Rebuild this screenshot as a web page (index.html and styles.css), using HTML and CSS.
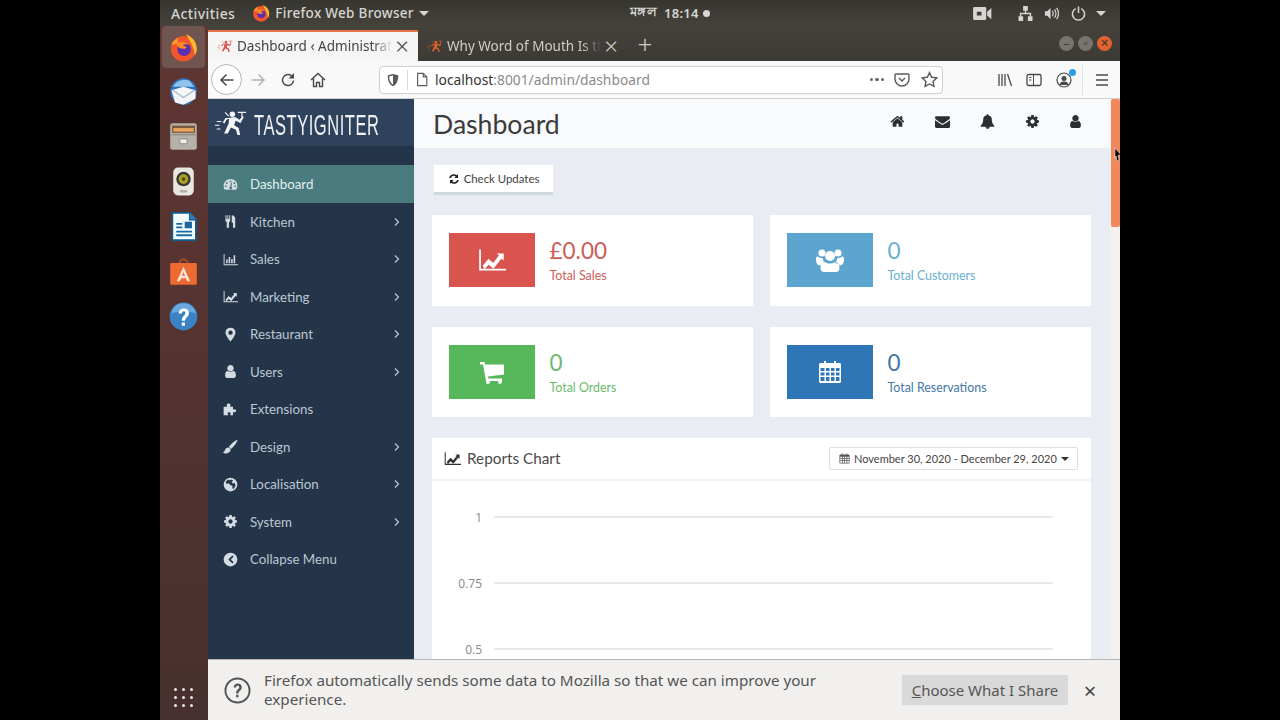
FILE: index.html
```html
<!DOCTYPE html>
<html lang="en">
<head>
    <meta charset="UTF-8">
    <meta name="viewport" content="width=device-width, initial-scale=1.0">
    <title>Dashboard - Administration</title>
    <link rel="stylesheet" href="styles.css">
</head>
<body>
    <svg class="sprite" xmlns="http://www.w3.org/2000/svg">
        <symbol id="i-home" viewBox="0 0 1792 1792"><path d="M1472 992v480q0 26-19 45t-45 19h-384v-384h-256v384h-384q-26 0-45-19t-19-45v-480q0-1 .5-3t.5-3l575-474 575 474q1 2 1 6zm223-69l-62 74q-8 9-21 11h-3q-13 0-21-7l-692-577-692 577q-12 8-24 7-13-2-21-11l-62-74q-8-10-7-23.5t11-21.5l719-599q32-26 76-26t76 26l244 204v-195q0-14 9-23t23-9h192q14 0 23 9t9 23v408l219 182q10 8 11 21.5t-7 23.5z"/></symbol>
        <symbol id="i-envelope" viewBox="0 0 1792 1792"><path d="M1792 710v794q0 66-47 113t-113 47h-1472q-66 0-113-47t-47-113v-794q44 49 101 87 362 246 497 345 57 42 92.5 65.5t94.5 48 110 24.5h2q51 0 110-24.5t94.5-48 92.5-65.5q170-123 498-345 57-39 100-87zm0-294q0 79-49 151t-122 123q-376 261-468 325-10 7-42.5 30.5t-54 38-52 32.5-57.5 27-50 9h-2q-23 0-50-9t-57.5-27-52-32.5-54-38-42.5-30.5q-91-64-262-182.5t-205-142.5q-62-42-117-115.5t-55-136.5q0-78 41.5-130t118.5-52h1472q65 0 112.5 47t47.5 113z"/></symbol>
        <symbol id="i-bell" viewBox="0 0 1792 1792"><path d="M912 1696q0-16-16-16-59 0-101.5-42.5t-42.5-101.5q0-16-16-16t-16 16q0 73 51.5 124.5t124.5 51.5q16 0 16-16zm816-288q0 52-38 90t-90 38h-448q0 106-75 181t-181 75-181-75-75-181h-448q-52 0-90-38t-38-90q50-42 91-88t85-119.5 74.5-158.5 50-206 19.5-260q0-152 117-282.5t307-158.5q-8-19-8-39 0-40 28-68t68-28 68 28 28 68q0 20-8 39 190 28 307 158.5t117 282.5q0 139 19.5 260t50 206 74.5 158.5 85 119.5 91 88z"/></symbol>
        <symbol id="i-cog" viewBox="0 0 1792 1792"><path d="M1152 896q0-106-75-181t-181-75-181 75-75 181 75 181 181 75 181-75 75-181zm512-109v222q0 12-8 23t-20 13l-185 28q-19 54-39 91 35 50 107 138 10 12 10 25t-9 23q-27 37-99 108t-94 71q-12 0-26-9l-138-108q-44 23-91 38-16 136-29 186-7 28-36 28h-222q-14 0-24.5-8.5t-11.5-21.5l-28-184q-49-16-90-37l-141 107q-10 9-25 9-14 0-25-11-126-114-165-168-7-10-7-23 0-12 8-23 15-21 51-66.5t54-70.5q-27-50-41-99l-183-27q-13-2-21-12.5t-8-23.5v-222q0-12 8-23t19-13l186-28q14-46 39-92-40-57-107-138-10-12-10-24 0-10 9-23 26-36 98.5-107.5t94.5-71.5q13 0 26 10l138 107q44-23 91-38 16-136 29-186 7-28 36-28h222q14 0 24.5 8.5t11.5 21.5l28 184q49 16 90 37l142-107q9-9 24-9 13 0 25 10 129 119 165 170 7 8 7 22 0 12-8 23-15 21-51 66.5t-54 70.5q26 50 41 98l183 28q13 2 21 12.5t8 23.5z"/></symbol>
        <symbol id="i-user" viewBox="0 0 1792 1792"><path d="M1536 1399q0 109-62.5 187t-150.5 78h-854q-88 0-150.5-78t-62.5-187q0-85 8.5-160.5t31.5-152 58.5-131 94-89 134.5-34.5q131 128 313 128t313-128q76 0 134.5 34.5t94 89 58.5 131 31.5 152 8.5 160.5zm-256-887q0 159-112.5 271.5t-271.5 112.5-271.5-112.5-112.5-271.5 112.5-271.5 271.5-112.5 271.5 112.5 112.5 271.5z"/></symbol>
        <symbol id="i-gauge" viewBox="0 0 24 24"><path fill-rule="evenodd" d="M12 3C5.6 3 1 8 1 14c0 2.500 .8 4.800 2 6.500h18c1.200-1.700 2-4 2-6.500C23 8 18.400 3 12 3zM12 5.500a1.500 1.500 0 1 1 0 3 1.500 1.500 0 0 1 0-3zM6 8a1.500 1.500 0 1 1 0 3 1.500 1.500 0 0 1 0-3zM18 8a1.500 1.500 0 1 1 0 3 1.500 1.500 0 0 1 0-3zM4.500 13a1.500 1.500 0 1 1 0 3 1.500 1.500 0 0 1 0-3zM19.500 13a1.500 1.500 0 1 1 0 3 1.500 1.500 0 0 1 0-3zM14.500 9.500l-1 6.200a2.200 2.200 0 1 1-1.900-.2l1.200-6.200z"/></symbol>
        <symbol id="i-cutlery" viewBox="0 0 24 24"><path d="M4 2h1.500v6H7V2h1.500v6H10V2h1.500v8c0 1.500-1 2.500-2 3v9H6v-9c-1-.5-2-1.500-2-3zM14 2c3 0 5.500 2 5.500 6v14h-3.500v-8h-2z"/></symbol>
        <symbol id="i-bars" viewBox="0 0 24 24"><path d="M1 3h1.500v16.500H24V21H1zM5 12h2.500v6H5zM9 8h2.500v10H9zM13 11h2.500v7H13zM17 5h2.500v13H17z"/></symbol>
        <symbol id="i-line" viewBox="0 0 24 24"><path d="M1 3h1.500v16.500H24V21H1z"/><path d="M4 17l5-6 4 3.500 5-6.500-2-1.500h6v6l-2-1.500-6.800 8.500-4-3.500-3.700 4z"/></symbol>
        <symbol id="i-pin" viewBox="0 0 24 24"><path fill-rule="evenodd" d="M12 1a8 8 0 0 0-8 8c0 4.500 8 14 8 14s8-9.500 8-14a8 8 0 0 0-8-8zm0 4.500a3.500 3.500 0 1 1 0 7 3.500 3.500 0 0 1 0-7z"/></symbol>
        <symbol id="i-puzzle" viewBox="0 0 24 24"><path d="M9 2.500c1.500 0 3 1 3 2.500 0 1-.6 1.500-.6 2.500H16v4.500c1 0 1.500-.6 2.500-.6 1.500 0 2.500 1.200 2.500 2.600s-1 2.500-2.500 2.500c-1 0-1.500-.5-2.500-.5v5h-4.500c0-1 .6-1.500.6-2.500 0-1.200-1-2-2.300-2s-2.300.8-2.300 2c0 1 .6 1.500.6 2.500H1V7.500h5.500c0-1-.6-1.500-.6-2.500C5.900 3.500 7.500 2.500 9 2.500z"/></symbol>
        <symbol id="i-brush" viewBox="0 0 24 24"><path d="M22 1.500c.8 0 1.300.6 1 1.400-2 4.500-6.500 10.500-10 13l-3.500-3.500C12 9 17.500 3.500 22 1.500zM8.500 13.500c2 .3 3.400 1.700 3.700 3.700C12 20.500 9 23 5 23c-2 0-4-.7-5-2 1.500-.5 2.500-1.200 3-3 .6-2.500 2.500-4.500 5.500-4.500z"/></symbol>
        <symbol id="i-globe" viewBox="0 0 24 24"><path fill-rule="evenodd" d="M12 1a11 11 0 1 0 0 22 11 11 0 0 0 0-22zM8 4l3 1 3-1 2 2-2 2 1 2 4 0 1 4-3 5-2-1v-4l-3-1-3-3-3 1-2-3z"/></symbol>
        <symbol id="i-back-circle" viewBox="0 0 24 24"><path fill-rule="evenodd" d="M12 1a11 11 0 1 0 0 22 11 11 0 0 0 0-22zm3 4.500l2 2L12.500 12l4.500 4.500-2 2L8.500 12z"/></symbol>
        <symbol id="i-chevron" viewBox="0 0 10 10"><path d="M3 1.500L6.500 5 3 8.500" fill="none" stroke="currentColor" stroke-width="1.200"/></symbol>
        <symbol id="i-refresh" viewBox="0 0 24 24"><path d="M20 2.500v7.500h-7.500l3-3A6.500 6.500 0 0 0 5.600 10H2.300A9.500 9.500 0 0 1 17.800 4.700zM4 21.500V14h7.500l-3 3a6.500 6.500 0 0 0 9.900-3h3.300A9.500 9.500 0 0 1 6.200 19.300z"/></symbol>
        <symbol id="i-cart" viewBox="0 0 24 24"><path d="M0 2h4.500l.7 2.500H24v10l-16 2 .4 2H22v2.500H6L3 4.500H0z"/><circle cx="8" cy="22" r="2"/><circle cx="20" cy="22" r="2"/></symbol>
        <symbol id="i-users" viewBox="0 0 28 24"><circle cx="6" cy="5" r="3.500"/><circle cx="22" cy="5" r="3.500"/><circle cx="14" cy="8" r="5"/><path d="M0 10c0-1 1-1.500 2-1.500 1 1 2.500 1.500 4 1.500l1 .5c0 2 1 3.500 2 4.500-3 .5-4.500 1.500-5 2.500C1 17 0 15 0 10zM28 10c0-1-1-1.500-2-1.500-1 1-2.500 1.500-4 1.500l-1 .5c0 2-1 3.500-2 4.500 3 .5 4.500 1.500 5 2.500 3-.5 4-2.500 4-7.500zM9 14c1.500 1 3 1.500 5 1.500s3.500-.5 5-1.500c3 0 4.500 2.500 4.500 6 0 2.500-1.500 4-3.500 4H8c-2 0-3.500-1.500-3.500-4 0-3.500 1.500-6 4.500-6z"/></symbol>
        <symbol id="i-calendar" viewBox="0 0 24 24"><path fill-rule="evenodd" d="M6 1h2v2h8V1h2v2h3.500c.8 0 1.500.7 1.500 1.500v17c0 .8-.7 1.500-1.500 1.500h-19C1.700 23 1 22.300 1 21.500v-17C1 3.700 1.700 3 2.500 3H6zM2.500 8v3h4V8zM8 8v3h3.500V8zM13 8v3h3.500V8zM18 8v3h3.500V8zM2.500 12.500v3h4v-3zM8 12.500v3h3.500v-3zM13 12.500v3h3.500v-3zM18 12.500v3h3.500v-3zM2.500 17v4h4v-4zM8 17v4h3.500v-4zM13 17v4h3.500v-4zM18 17v4h3.500v-4z"/></symbol>
        <symbol id="runner" viewBox="0 0 36 28">
            <circle cx="20" cy="5" r="3"/>
            <path d="M15 9l8-1 5 3 3-4 1.500 1-3.500 6.500-5.500-2.500-1.500 5 5 3 1.500 7.500h-3l-1.500-5.500-5.500-2.500-3.500 6.500H11l5-11 .5-5-3 1-2 4-2-1 3-5z"/>
            <path d="M26 3h9M30.500 3v5M12 3l4 4" stroke="currentColor" stroke-width="1.300" fill="none"/>
            <path d="M3 13h5M1 17h5M3 21h4" stroke="currentColor" stroke-width="1.100" fill="none"/>
        </symbol>
        <symbol id="ff-logo" viewBox="0 0 24 24">
            <circle cx="12" cy="13" r="10.500" fill="#f0562c"/>
            <path d="M14 1c5 2 9 6 9 12 0 2-.5 4-1.500 5.500-1-7-4-12-7.500-17.500z" fill="#ffb52c"/>
            <path d="M2 10c1-3 3-5 6-6-1 2-1 3 0 4z" fill="#ff9a2a"/>
            <circle cx="12.500" cy="13.500" r="5.500" fill="#5b2fb0"/>
            <path d="M6 9c3-2.500 8-2 10.500 1-2-1-4-1-5 0 1 1 3 1 3 2.500-1 1-4 .5-6 0z" fill="#ff8a1f"/>
        </symbol>
    </svg>

    <div class="screen">
        <div class="panel">
            <div class="panel-left">
                <span class="activities">Activities</span>
                <svg class="panel-ff" viewBox="0 0 24 24"><use href="#ff-logo"/></svg>
                <span class="panel-app">Firefox Web Browser</span>
                <span class="caret"></span>
            </div>
            <div class="panel-clock"><span class="clock-day">মঙ্গল</span> 18:14 <span class="clock-dot"></span></div>
            <div class="panel-right">
                <svg class="tray tray-cam" viewBox="0 0 20 16"><path fill-rule="evenodd" d="M2 1h11a1.500 1.500 0 0 1 1.500 1.500v11A1.500 1.500 0 0 1 13 15H2a1.500 1.500 0 0 1-1.500-1.500v-11A1.500 1.500 0 0 1 2 1zm2.500 5v4h5V6zM15.500 6L20 2v12l-4.500-4z"/></svg>
                <svg class="tray tray-net" viewBox="0 0 16 16"><path d="M5.500 0h5v5H8.700v2.300H14V11h1.500v5h-5v-5h2V8.800H3.500V11h2v5h-5v-5H2V7.300h5.300V5H5.500z"/></svg>
                <svg class="tray tray-vol" viewBox="0 0 16 16"><path d="M1 5.500h2.500L7 2v12l-3.500-3.500H1z"/><path d="M9 5c1 1.800 1 4.200 0 6M11.300 3.500c1.800 2.800 1.800 6.200 0 9M13.500 2c2.500 3.800 2.500 8.200 0 12" fill="none" stroke="currentColor" stroke-width="1.300"/></svg>
                <svg class="tray tray-power" viewBox="0 0 16 16"><path d="M5 2.800a6.500 6.500 0 1 0 6 0M8 .5v7" fill="none" stroke="currentColor" stroke-width="1.600"/></svg>
                <span class="caret"></span>
            </div>
        </div>

        <div class="desktop">
            <div class="dock">
                <div class="dock-item dock-active">
                    <svg class="dock-icon" viewBox="0 0 24 24"><use href="#ff-logo"/></svg>
                </div>
                <div class="dock-item">
                    <svg class="dock-icon" viewBox="0 0 24 24"><circle cx="12" cy="12" r="11" fill="#2f6fb5"/><path d="M3 8c3-5 9-7 14-5l4 5z" fill="#8dc3ee"/><path d="M2 11l10-3 10 3v7l-10 5-7-2z" fill="#f3f5f8"/><path d="M3 11l9 6 9-6" fill="none" stroke="#a9b6c4"/></svg>
                </div>
                <div class="dock-item">
                    <svg class="dock-icon" viewBox="0 0 24 24"><rect x="1" y="1" width="22" height="22" rx="2" fill="#b5b0a8"/><rect x="2.500" y="3" width="19" height="6" fill="#7b5a3a"/><rect x="3.500" y="5" width="17" height="3" fill="#e9a35a"/><rect x="2" y="10" width="20" height="1" fill="#8e8a83"/><rect x="9" y="14" width="6" height="4" rx="1" fill="#f0eee9" stroke="#77736c" stroke-width=".6"/></svg>
                </div>
                <div class="dock-item">
                    <svg class="dock-icon" viewBox="0 0 24 24"><rect x="3.500" y="0.500" width="17" height="23" rx="4" fill="#e8e6e0"/><circle cx="12" cy="10" r="6" fill="#3b3a30"/><circle cx="12" cy="10" r="4" fill="#a9a227"/><circle cx="12" cy="10" r="1.500" fill="#4a4720"/><rect x="9" y="19" width="6" height="2" rx="1" fill="#b3b0a8"/></svg>
                </div>
                <div class="dock-item">
                    <svg class="dock-icon" viewBox="0 0 24 24"><path d="M2 0h15l6 6v18H2z" fill="#0d5b8f"/><path d="M3.500 1.500h13v5.500h5v15.500h-18z" fill="#f5fafc"/><path d="M17 0l6 6h-6z" fill="#2b7bb5"/><path d="M6 9h5v1.500H6zM6 12h5v1.500H6zM13 8h6v5.500h-6zM6 15.500h13V17H6zM6 18.500h13V20H6z" fill="#17699f"/></svg>
                </div>
                <div class="dock-item">
                    <svg class="dock-icon" viewBox="0 0 24 24"><path d="M8 5c0-5 8-5 8 0h-1.500c0-3-5-3-5 0z" fill="#a84f25"/><rect x="1" y="5" width="22" height="18" rx="1" fill="#ed6b32"/><path d="M12 8l5.500 12H15l-1-2.500h-4L9 20H6.500zM12 12.500l-1.200 3h2.400z" fill="#fbe3d6"/></svg>
                </div>
                <div class="dock-item">
                    <svg class="dock-icon" viewBox="0 0 24 24"><circle cx="12" cy="12" r="11.500" fill="#3a82c4"/><path d="M2 10a10 9 0 0 1 20 0c-4-3-16-3-20 0z" fill="#6aa9de"/><path d="M8 9.500c0-5.500 8.500-5.500 8.500-.5 0 3.500-3.300 3.500-3.300 6.500h-2.600c0-4 3-4.500 3-6.500 0-2-3-2-3 .5zM10.600 17h2.600v2.600h-2.600z" fill="#fff"/></svg>
                </div>
                <div class="dock-spacer"></div>
                <div class="dock-grid">
                    <i></i><i></i><i></i><i></i><i></i><i></i><i></i><i></i><i></i>
                </div>
            </div>

            <div class="window">
                <div class="titlebar">
                    <div class="tab tab-active">
                        <svg class="tab-icon" viewBox="0 0 36 28"><use href="#runner"/></svg>
                        <span class="tab-title">Dashboard ‹ Administrat</span>
                        <span class="tab-close">×</span>
                    </div>
                    <div class="tab">
                        <svg class="tab-icon tab-icon-orange" viewBox="0 0 36 28"><use href="#runner"/></svg>
                        <span class="tab-title">Why Word of Mouth Is th</span>
                        <span class="tab-close">×</span>
                    </div>
                    <span class="tab-new">+</span>
                    <div class="win-buttons">
                        <span class="win-btn">–</span>
                        <span class="win-btn">▫</span>
                        <span class="win-btn win-close">×</span>
                    </div>
                </div>

                <div class="toolbar">
                    <span class="nav-back">
                        <svg class="tb-icon" viewBox="0 0 16 16"><path d="M14.500 8H2M7.500 2.500L2 8l5.500 5.500" fill="none" stroke="currentColor" stroke-width="1.500"/></svg>
                    </span>
                    <svg class="tb-icon nav-forward" viewBox="0 0 16 16"><path d="M1.500 8H14M8.500 2.500L14 8l-5.500 5.500" fill="none" stroke="currentColor" stroke-width="1.500"/></svg>
                    <svg class="tb-icon nav-reload" viewBox="0 0 16 16"><path d="M13.500 8.500A5.500 5.500 0 1 1 11.500 3.800" fill="none" stroke="currentColor" stroke-width="1.500"/><path d="M14 1v5.500H8.500z"/></svg>
                    <svg class="tb-icon nav-home" viewBox="0 0 16 16"><path d="M1 8l7-6.500L15 8M3.500 6.500v8h3v-4h3v4h3v-8" fill="none" stroke="currentColor" stroke-width="1.400"/></svg>
                    <div class="urlbar">
                        <svg class="url-shield" viewBox="0 0 16 16"><path fill-rule="evenodd" d="M8 1l6 1.500c0 6-1.500 10.500-6 12.500C3.500 13 2 8.500 2 2.500zm0 1.800L3.600 3.900C3.800 8.300 5 11.300 8 13z"/></svg>
                        <span class="url-sep"></span>
                        <svg class="url-page" viewBox="0 0 16 16"><path d="M3 1h6.500L13.500 5v10H3zM9.500 1v4h4" fill="none" stroke="currentColor" stroke-width="1.300"/></svg>
                        <span class="url-text"><b>localhost</b>:8001/admin/dashboard</span>
                        <span class="url-dots"><i></i><i></i><i></i></span>
                        <svg class="url-pocket" viewBox="0 0 16 16"><path d="M2 2h12c.6 0 1 .4 1 1v4c0 4-3.200 7-7 7s-7-3-7-7V3c0-.6.400-1 1-1zM5 6l3 3 3-3" fill="none" stroke="currentColor" stroke-width="1.400"/></svg>
                        <svg class="url-star" viewBox="0 0 16 16"><path d="M8 1.500l2 4.400 4.800.6-3.500 3.300.9 4.700L8 12.200l-4.200 2.300.9-4.700L1.200 6.500 6 5.900z" fill="none" stroke="currentColor" stroke-width="1.300"/></svg>
                    </div>
                    <svg class="tb-icon tb-library" viewBox="0 0 16 16"><path d="M2 2v12M5 2v12M8 2v12M10.500 2l4 12" fill="none" stroke="currentColor" stroke-width="1.300"/></svg>
                    <svg class="tb-icon tb-sidebar" viewBox="0 0 16 16"><rect x="1" y="2.500" width="14" height="11" rx="1.500" fill="none" stroke="currentColor" stroke-width="1.300"/><path d="M7.500 2.500v11M3 5.500h2.500M3 8h2.500" stroke="currentColor"/></svg>
                    <span class="tb-account">
                        <svg class="tb-icon" viewBox="0 0 16 16"><circle cx="8" cy="8" r="7" fill="none" stroke="currentColor" stroke-width="1.200"/><circle cx="8" cy="6.500" r="2.500"/><path d="M3.500 13c.5-3 2.500-3.500 4.500-3.500s4 .5 4.500 3.500z"/></svg>
                        <span class="account-dot"></span>
                    </span>
                    <span class="tb-sep"></span>
                    <svg class="tb-icon tb-menu" viewBox="0 0 16 16"><path d="M2 3h12M2 8h12M2 13h12" stroke="currentColor" stroke-width="1.500"/></svg>
                </div>

                <div class="page">
                    <aside class="sidebar">
                        <div class="logo">
                            <svg class="logo-art" viewBox="0 0 36 28"><use href="#runner"/></svg>
                            <span class="logo-text">TASTYIGNITER</span>
                        </div>
                        <nav class="side-nav">
                            <a class="nav-item active"><svg class="nav-icon"><use href="#i-gauge"/></svg><span>Dashboard</span></a>
                            <a class="nav-item"><svg class="nav-icon"><use href="#i-cutlery"/></svg><span>Kitchen</span><svg class="nav-arrow"><use href="#i-chevron"/></svg></a>
                            <a class="nav-item"><svg class="nav-icon"><use href="#i-bars"/></svg><span>Sales</span><svg class="nav-arrow"><use href="#i-chevron"/></svg></a>
                            <a class="nav-item"><svg class="nav-icon"><use href="#i-line"/></svg><span>Marketing</span><svg class="nav-arrow"><use href="#i-chevron"/></svg></a>
                            <a class="nav-item"><svg class="nav-icon"><use href="#i-pin"/></svg><span>Restaurant</span><svg class="nav-arrow"><use href="#i-chevron"/></svg></a>
                            <a class="nav-item"><svg class="nav-icon"><use href="#i-user"/></svg><span>Users</span><svg class="nav-arrow"><use href="#i-chevron"/></svg></a>
                            <a class="nav-item"><svg class="nav-icon"><use href="#i-puzzle"/></svg><span>Extensions</span></a>
                            <a class="nav-item"><svg class="nav-icon"><use href="#i-brush"/></svg><span>Design</span><svg class="nav-arrow"><use href="#i-chevron"/></svg></a>
                            <a class="nav-item"><svg class="nav-icon"><use href="#i-globe"/></svg><span>Localisation</span><svg class="nav-arrow"><use href="#i-chevron"/></svg></a>
                            <a class="nav-item"><svg class="nav-icon"><use href="#i-cog"/></svg><span>System</span><svg class="nav-arrow"><use href="#i-chevron"/></svg></a>
                            <a class="nav-item"><svg class="nav-icon"><use href="#i-back-circle"/></svg><span>Collapse Menu</span></a>
                        </nav>
                    </aside>

                    <main class="main">
                        <header class="page-header">
                            <h1>Dashboard</h1>
                            <div class="header-icons">
                                <svg class="header-icon"><use href="#i-home"/></svg>
                                <svg class="header-icon"><use href="#i-envelope"/></svg>
                                <svg class="header-icon"><use href="#i-bell"/></svg>
                                <svg class="header-icon"><use href="#i-cog"/></svg>
                                <svg class="header-icon"><use href="#i-user"/></svg>
                            </div>
                        </header>

                        <div class="content">
                            <button class="btn-updates"><svg class="btn-icon"><use href="#i-refresh"/></svg>Check Updates</button>

                            <div class="stat-grid">
                                <div class="stat-card stat-red">
                                    <div class="stat-box"><svg class="stat-icon"><use href="#i-line"/></svg></div>
                                    <div><div class="stat-value">£0.00</div><div class="stat-label">Total Sales</div></div>
                                </div>
                                <div class="stat-card stat-cyan">
                                    <div class="stat-box"><svg class="stat-icon"><use href="#i-users"/></svg></div>
                                    <div><div class="stat-value">0</div><div class="stat-label">Total Customers</div></div>
                                </div>
                                <div class="stat-card stat-green">
                                    <div class="stat-box"><svg class="stat-icon"><use href="#i-cart"/></svg></div>
                                    <div><div class="stat-value">0</div><div class="stat-label">Total Orders</div></div>
                                </div>
                                <div class="stat-card stat-blue">
                                    <div class="stat-box"><svg class="stat-icon"><use href="#i-calendar"/></svg></div>
                                    <div><div class="stat-value">0</div><div class="stat-label">Total Reservations</div></div>
                                </div>
                            </div>

                            <section class="chart-card">
                                <div class="chart-head">
                                    <svg class="chart-icon"><use href="#i-line"/></svg>
                                    <h3>Reports Chart</h3>
                                    <div class="date-range">
                                        <svg class="date-icon"><use href="#i-calendar"/></svg>
                                        <span>November 30, 2020 - December 29, 2020</span>
                                        <span class="date-caret"></span>
                                    </div>
                                </div>
                                <div class="chart-body">
                                    <div class="chart-row"><span class="chart-label">1</span><span class="chart-line"></span></div>
                                    <div class="chart-row"><span class="chart-label">0.75</span><span class="chart-line"></span></div>
                                    <div class="chart-row"><span class="chart-label">0.5</span><span class="chart-line"></span></div>
                                </div>
                            </section>
                        </div>
                    </main>

                    <div class="scrollbar"><div class="scroll-thumb"></div></div>
                    <svg class="cursor" viewBox="0 0 8 14"><path d="M1 0l6 7-3 .3 1 5-2 .7-1-5-1 2z" fill="#000" stroke="#fff" stroke-width=".5"/></svg>

                    <div class="notice">
                        <svg class="notice-icon" viewBox="0 0 28 28"><circle cx="14" cy="14" r="12.500" fill="none" stroke="currentColor" stroke-width="2"/><path d="M10 11c0-5.500 8.500-5.500 8.500-.5 0 3.500-3.500 3.500-3.500 6.500h-2.500c0-4 3.300-4.500 3.300-6.500 0-2-3.300-2-3.300.5zM12.500 18.500H15V21h-2.500z"/></svg>
                        <p class="notice-text">Firefox automatically sends some data to Mozilla so that we can improve your experience.</p>
                        <button class="notice-btn"><u>C</u>hoose What I Share</button>
                        <span class="notice-close">×</span>
                    </div>
                </div>
            </div>
        </div>
    </div>
</body>
</html>
```

FILE: styles.css
```css
* {
    box-sizing: border-box;
}

html, body {
    margin: 0;
    height: 100%;
    background: #000;
    overflow: hidden;
}

body {
    font-family: 'Lato', 'Open Sans', sans-serif;
    color: #333;
}

.sprite {
    position: absolute;
    width: 0;
    height: 0;
}

.screen {
    width: 960px;
    height: 720px;
    margin: 0 auto;
    display: flex;
    flex-direction: column;
}

/* ubuntu top panel */
.panel {
    height: 26px;
    flex: none;
    display: flex;
    align-items: center;
    background: linear-gradient(#37352f, #45423c);
    color: #d6d5d1;
    font-family: 'Noto Sans', 'Open Sans', sans-serif;
    font-size: 13.5px;
    font-weight: 500;
    letter-spacing: .3px;
}

.activities {
    font-size: 14px;
    letter-spacing: .4px;
}

.panel-left {
    width: 470px;
    display: flex;
    align-items: center;
    padding-left: 11px;
}

.panel-ff {
    width: 18px;
    height: 18px;
    margin-left: 17px;
}

.panel-app {
    margin-left: 5px;
}

.caret {
    width: 0;
    height: 0;
    margin-left: 5px;
    border-left: 5px solid transparent;
    border-right: 5px solid transparent;
    border-top: 5px solid #d6d5d1;
}

.panel-clock {
    display: flex;
    align-items: center;
    gap: 5px;
    font-size: 13px;
    font-weight: 600;
}

.clock-day {
    font-family: 'Noto Sans', 'Noto Sans CJK SC', sans-serif;
    font-size: 12.5px;
    margin-right: 2px;
}

.clock-dot {
    width: 7px;
    height: 7px;
    margin-left: -1px;
    border-radius: 50%;
    background: #d6d5d1;
}

.panel-right {
    margin-left: auto;
    padding-right: 14px;
    display: flex;
    align-items: center;
}

.tray {
    fill: currentColor;
    height: 15px;
}

.tray-cam { width: 20px; margin-right: 26px; }
.tray-net { width: 15px; margin-right: 11px; }
.tray-vol { width: 15px; margin-right: 12px; }
.tray-power { width: 15px; margin-right: 5px; }

/* desktop + dock */
.desktop {
    flex: 1;
    display: flex;
    min-height: 0;
}

.dock {
    width: 48px;
    flex: none;
    display: flex;
    flex-direction: column;
    align-items: center;
    padding: 0 3px 0 2px;
    background: linear-gradient(#5f3632, #47302f);
}

.dock-item {
    width: 43px;
    height: 45px;
    flex: none;
    display: flex;
    align-items: center;
    justify-content: center;
}

.dock-active {
    height: 42px;
    margin-bottom: 1px;
    border-radius: 4px;
    background: #6f5450;
}

.dock-icon {
    width: 29px;
    height: 29px;
    margin-right: 1px;
}

.dock-spacer {
    flex: 1;
}

.dock-grid {
    display: grid;
    grid-template-columns: repeat(3, 3.500px);
    gap: 4.500px;
    margin-bottom: 13px;
}

.dock-grid i {
    width: 3.500px;
    height: 3.500px;
    border-radius: 50%;
    background: #f0eeee;
}

/* firefox window */
.window {
    flex: 1;
    min-width: 0;
    display: flex;
    flex-direction: column;
}

.titlebar {
    height: 35px;
    flex: none;
    display: flex;
    align-items: flex-end;
    background: linear-gradient(#45423c, #3c3a35);
    font-family: 'Noto Sans', 'Open Sans', sans-serif;
    font-size: 13.5px;
    color: #cfcdc8;
}

.tab {
    width: 209px;
    height: 31px;
    display: flex;
    align-items: center;
    padding: 0 6px 0 9px;
}

.tab-active {
    width: 210px;
    padding-bottom: 2px;
    background: #f5f5f5;
    border-top: 2px solid #e8734a;
    color: #444;
}

.tab-icon {
    width: 16px;
    height: 14px;
    flex: none;
    fill: #d9534f;
    color: #d9534f;
}

.tab-icon-orange {
    fill: #e0622a;
    color: #e0622a;
}

.tab-title {
    flex: 1;
    min-width: 0;
    margin-left: 4px;
    white-space: nowrap;
    -webkit-mask-image: linear-gradient(90deg, #000 88%, transparent);
    mask-image: linear-gradient(90deg, #000 88%, transparent);
}

.tab-close {
    width: 20px;
    text-align: center;
    font-size: 24px;
    line-height: 20px;
    font-weight: 300;
}

.tab-new {
    margin: 0 0 1px 9px;
    width: 18px;
    height: 30px;
    font-size: 26px;
    line-height: 28px;
    font-weight: 300;
    text-align: center;
}

.win-buttons {
    margin-left: auto;
    align-self: center;
    display: flex;
    gap: 4px;
    padding-right: 8px;
}

.win-btn {
    width: 15px;
    height: 15px;
    border-radius: 50%;
    background: #76746f;
    color: #35342f;
    font-size: 11px;
    line-height: 14px;
    text-align: center;
}

.win-close {
    background: #e2622f;
    font-size: 14px;
}

.toolbar {
    height: 38px;
    flex: none;
    display: flex;
    align-items: center;
    padding-left: 3px;
    background: #f9f9f9;
    border-bottom: 1px solid #cfcfcf;
    color: #4a4a4a;
}

.nav-back {
    width: 31px;
    height: 31px;
    display: flex;
    align-items: center;
    justify-content: center;
    background: #fff;
    border: 1px solid #b5b5b5;
    border-radius: 50%;
}

.tb-icon {
    width: 16px;
    height: 16px;
    flex: none;
    fill: currentColor;
}

.nav-forward {
    margin-left: 8px;
    color: #b5b5b5;
}

.nav-reload { margin-left: 14px; }
.nav-home { margin-left: 14px; }

.urlbar {
    width: 564px;
    height: 28px;
    margin-left: 53px;
    display: flex;
    align-items: center;
    padding: 0 4px 0 6px;
    background: #fff;
    border: 1px solid #d0d0d0;
    border-radius: 4px;
    color: #5a5a5a;
}

.url-shield {
    width: 14px;
    height: 14px;
    fill: currentColor;
}

.url-sep {
    width: 1px;
    height: 20px;
    margin: 0 7px;
    background: #d8d8d8;
}

.url-page {
    width: 14px;
    height: 15px;
}

.url-text {
    margin-left: 6px;
    flex: 1;
    font-family: 'Noto Sans', 'Open Sans', sans-serif;
    font-size: 13.8px;
    color: #8a8a8a;
}

.url-text b {
    font-weight: 400;
    color: #333;
}

.url-dots {
    display: flex;
    gap: 2px;
    margin-right: 10px;
}

.url-dots i {
    width: 3.500px;
    height: 3.500px;
    border-radius: 50%;
    background: #666;
}

.url-pocket {
    width: 16px;
    height: 16px;
    margin-right: 11px;
}

.url-star {
    width: 17px;
    height: 17px;
}

.tb-library { margin-left: 54px; }
.tb-sidebar { margin-left: 13px; }

.tb-account {
    position: relative;
    display: flex;
    margin-left: 14px;
}

.account-dot {
    position: absolute;
    top: -3px;
    right: -4px;
    width: 7px;
    height: 7px;
    border-radius: 50%;
    background: #2a9de8;
}

.tb-sep {
    width: 1px;
    height: 30px;
    margin-left: 10px;
    background: #e2e2e2;
}

.tb-menu { margin-left: 11px; }

/* page */
.page {
    position: relative;
    flex: 1;
    min-height: 0;
    display: flex;
    overflow: hidden;
}

.sidebar {
    width: 206px;
    flex: none;
    background: #253549;
}

.logo {
    height: 47px;
    display: flex;
    align-items: center;
    padding-left: 6px;
    background: #2e425c;
}

.logo-art {
    width: 33px;
    height: 27px;
    flex: none;
    fill: #f2f4f6;
    color: #f2f4f6;
}

.logo-text {
    margin: 5px 0 0 7px;
    font-family: 'Liberation Sans Narrow', 'Liberation Sans', sans-serif;
    font-size: 16.5px;
    letter-spacing: .55px;
    white-space: nowrap;
    color: #eef0f3;
    transform: scaleY(1.8);
}

.side-nav {
    margin-top: 19.300px;
}

.nav-item {
    height: 37.500px;
    display: flex;
    align-items: center;
    padding: 0 12px 0 15px;
    color: #bcc7d2;
    font-size: 13.300px;
}

.nav-item.active {
    background: #4a7b7e;
    color: #e3eeee;
}

.nav-icon {
    width: 15px;
    height: 15px;
    flex: none;
    margin-right: 12px;
    fill: #d4dbe2;
}

.nav-arrow {
    width: 10px;
    height: 10px;
    margin-left: auto;
    color: #bcc7d2;
}

.main {
    flex: 1;
    min-width: 0;
    display: flex;
    flex-direction: column;
    background: #e9edf3;
}

.page-header {
    height: 49px;
    flex: none;
    display: flex;
    align-items: center;
    padding: 0 0 0 19px;
    background: #f9fafc;
}

.page-header h1 {
    margin: 0;
    font-size: 26.600px;
    font-weight: 400;
    color: #3b3b3b;
}

.header-icons {
    margin-left: auto;
    display: flex;
    gap: 30px;
    padding: 0 27px 4px 0;
}

.header-icon {
    width: 15px;
    height: 15px;
    fill: #2b2f33;
}

.header-icon:last-child {
    margin-left: -2px;
}

.content {
    padding: 17px 19px 0 18px;
}

.btn-updates {
    width: 121px;
    height: 31px;
    display: flex;
    align-items: center;
    justify-content: center;
    gap: 4px;
    margin: -1px 0 20px 1px;
    padding: 0;
    background: #fff;
    border: 1px solid #eef0f3;
    border-bottom: 3px solid #cdd8df;
    border-radius: 2px;
    font-family: inherit;
    font-size: 11.400px;
    color: #3f3f3f;
}

.btn-icon {
    width: 12px;
    height: 12px;
    fill: #222;
}

.stat-grid {
    display: grid;
    grid-template-columns: 321px 321px;
    gap: 21px 17px;
    margin-bottom: 21px;
}

.stat-card {
    height: 90.500px;
    display: flex;
    align-items: flex-start;
    gap: 14.500px;
    padding: 18px 17px;
    background: #fff;
}

.stat-box {
    width: 86px;
    height: 54px;
    flex: none;
    display: flex;
    align-items: center;
    justify-content: center;
}

.stat-icon {
    width: 28px;
    height: 24px;
    fill: #fff;
}

.stat-red .stat-icon {
    height: 28px;
}

.stat-value {
    font-size: 22.500px;
    line-height: 35px;
}

.stat-label {
    font-size: 12.400px;
    line-height: 15px;
}

.stat-red .stat-box { background: #d9534f; }
.stat-red { color: #cd5c58; }
.stat-cyan .stat-box { background: #5ba5cf; }
.stat-cyan { color: #6aaed3; }
.stat-green .stat-box { background: #55b65a; }
.stat-green { color: #6bbb6e; }
.stat-blue .stat-box { background: #2f76b6; }
.stat-blue { color: #3f78a8; }

.chart-card {
    background: #fff;
}

.chart-head {
    height: 43px;
    display: flex;
    align-items: center;
    padding: 0 13px 0 11px;
    border-bottom: 2px solid #f0f2f5;
}

.chart-icon {
    width: 19px;
    height: 17px;
    fill: #333;
}

.chart-head h3 {
    margin: -1px 0 0 5px;
    font-size: 15.300px;
    font-weight: 400;
    color: #4a4a4a;
}

.date-range {
    margin-left: auto;
    width: 249px;
    height: 23px;
    display: flex;
    align-items: center;
    gap: 4px;
    padding-left: 9px;
    border: 1px solid #dcdfe3;
    border-radius: 2px;
    font-size: 11px;
    white-space: nowrap;
    color: #444;
}

.date-icon {
    width: 11px;
    height: 11px;
    flex: none;
    fill: #555;
}

.date-caret {
    width: 0;
    height: 0;
    border-left: 4px solid transparent;
    border-right: 4px solid transparent;
    border-top: 4px solid #333;
}

.chart-body {
    padding: 3px 38px 0 0;
}

.chart-row {
    height: 66px;
    display: flex;
    align-items: center;
    gap: 12px;
}

.chart-label {
    width: 50px;
    text-align: right;
    font-family: 'Open Sans', sans-serif;
    font-size: 12px;
    color: #888;
}

.chart-line {
    flex: 1;
    height: 2px;
    background: #e8e8e8;
}

.scrollbar {
    width: 10px;
    flex: none;
    background: #f3f0ee;
}

.scroll-thumb {
    height: 128px;
    margin-left: 1px;
    background: #f0885c;
    border-radius: 2px;
}

.cursor {
    position: absolute;
    top: 49px;
    left: 906px;
    width: 8px;
    height: 14px;
}

/* data notice over the page */
.notice {
    position: absolute;
    left: 0;
    right: 0;
    bottom: 0;
    height: 61px;
    display: flex;
    align-items: center;
    padding: 0 18px 0 16px;
    background: #f1f0ee;
    border-top: 1px solid #b5b5b5;
    font-family: 'Noto Sans', 'Open Sans', sans-serif;
    color: #555;
}

.notice-icon {
    width: 27px;
    height: 27px;
    flex: none;
    fill: currentColor;
}

.notice-text {
    width: 600px;
    margin: 0 0 0 13px;
    font-size: 15.200px;
    line-height: 19px;
}

.notice-btn {
    width: 166px;
    height: 30px;
    margin-left: auto;
    padding: 0;
    border: none;
    background: #d9d9d9;
    font-family: inherit;
    font-size: 15px;
    color: #555;
}

.notice-close {
    width: 24px;
    margin-left: 10px;
    text-align: center;
    font-size: 22px;
    line-height: 22px;
    color: #444;
}
```
